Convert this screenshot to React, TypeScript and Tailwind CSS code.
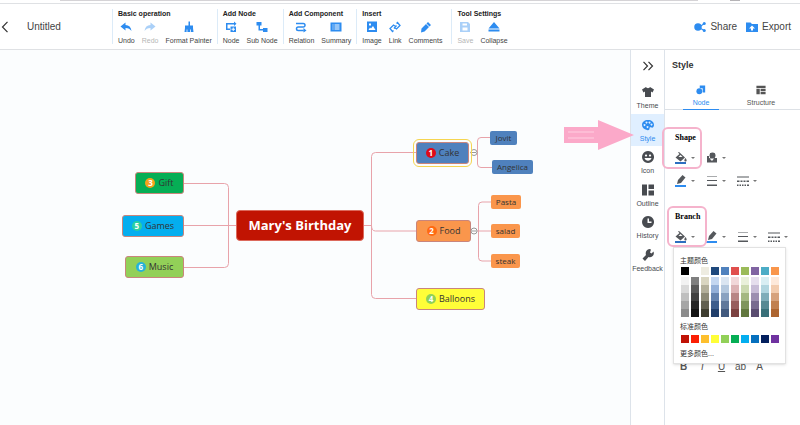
import type { ReactNode } from "react";

type Tool = { label: string; icon: ReactNode; disabled?: boolean };
type Group = { title: string; tools: Tool[] };

function Svg({ children, className = "size-3" }: { children: ReactNode; className?: string }) {
  return (
    <svg viewBox="0 0 24 24" className={className} fill="currentColor" stroke="none" aria-hidden="true">
      {children}
    </svg>
  );
}

const groups: Group[] = [
  {
    title: "Basic operation",
    tools: [
      { label: "Undo", icon: <Svg><path d="M11 3v5c7 0 11 4 12 12-3-4-6-6-12-6v5L1 11z" /></Svg> },
      { label: "Redo", disabled: true, icon: <Svg><path d="M13 3v5C6 8 2 12 1 20c3-4 6-6 12-6v5l10-8z" /></Svg> },
      {
        label: "Format Painter",
        icon: <Svg><path d="M11 1h3v8h6v5H4V9h7zM4 14h16l1 8H3z" /><path d="M8 17v5M15 17v5" stroke="#fff" strokeWidth="1.500" /></Svg>,
      },
    ],
  },
  {
    title: "Add Node",
    tools: [
      {
        label: "Node",
        icon: (
          <Svg>
            <path d="M2 4h16V1l5 4.500-5 4.500V7H5v8h5v3H2z" />
            <path fillRule="evenodd" d="M11 11h11v11H11zM15.500 13v2.500H13v2h2.500V20h2v-2.500H20v-2h-2.500V13z" />
          </Svg>
        ),
      },
      { label: "Sub Node", icon: <Svg><path d="M1 2h10v7H8v7h6v-2h9v8h-9v-3H5V9H1z" /></Svg> },
    ],
  },
  {
    title: "Add Component",
    tools: [
      {
        label: "Relation",
        icon: (
          <Svg>
            <path
              d="M2 5h14.500a3.500 3.500 0 0 1 0 7H6.500a3.500 3.500 0 0 0 0 7h11"
              fill="none"
              stroke="currentColor"
              strokeWidth="3"
            />
            <path d="M17 14l6 5-6 4z" />
          </Svg>
        ),
      },
      {
        label: "Summary",
        icon: <Svg><path fillRule="evenodd" d="M1 3h22v18H1zM5 7v2h2V7zm4 0v2h10V7zm-4 4v2h2v-2zm4 0v2h10v-2zm-4 4v2h2v-2zm4 0v2h10v-2z" /></Svg>,
      },
    ],
  },
  {
    title: "Insert",
    tools: [
      {
        label: "Image",
        icon: <Svg><path fillRule="evenodd" d="M2 1h20v21H2zM5 18h14l-5-8-4 5-2-2zM6 5v4h4V5z" /></Svg>,
      },
      {
        label: "Link",
        icon: (
          <Svg>
            <path
              d="M10 15l5-6M9 19l-2 2-5-6 7-7 4 3M15 5l2-2 5 6-7 7-4-3"
              fill="none"
              stroke="currentColor"
              strokeWidth="2.600"
            />
          </Svg>
        ),
      },
      { label: "Comments", icon: <Svg><path d="M16 2l6 6-3 3-6-6zM12 6l6 6-9 9-7 2 1-8z" /></Svg> },
    ],
  },
  {
    title: "Tool Settings",
    tools: [
      {
        label: "Save",
        disabled: true,
        icon: <Svg><path fillRule="evenodd" d="M2 2h16l4 4v16H2zM7 5v4h9V5zm0 8v6h10v-6z" /></Svg>,
      },
      { label: "Collapse", icon: <Svg><path d="M12 2l11 13H1zM1 17h22v4H1z" /></Svg> },
    ],
  },
];

const sideItems: Tool[] = [
  { label: "Theme", icon: <Svg><path d="M8 2c1 3 7 3 8 0l8 5-3 6-3-2v11H6V11l-3 2-3-6z" /></Svg> },
  {
    label: "Style",
    icon: (
      <Svg>
        <path
          fillRule="evenodd"
          d="M12 2c7 0 12 4 12 10 0 4-3 6-5 5-3-1-4 0-4 2 0 3-2 4-5 3C4 21 0 17 0 12 0 6 5 2 12 2zM5 10a2 2 0 1 0 .1 0zM9 5a2 2 0 1 0 .1 0zM15 5a2 2 0 1 0 .1 0zM19 9a2 2 0 1 0 .1 0zM11 14a2 2 0 1 0 .1 0z"
        />
      </Svg>
    ),
  },
  {
    label: "Icon",
    icon: (
      <Svg>
        <path
          fillRule="evenodd"
          d="M12 0a12 12 0 1 0 .1 0zM8 7a2 2 0 1 0 .1 0zM16 7a2 2 0 1 0 .1 0zM5 14h14c-2 7-12 7-14 0z"
        />
      </Svg>
    ),
  },
  { label: "Outline", icon: <Svg><path d="M0 1h10v22H0zM13 1h11v9H13zM13 13h11v10H13z" /></Svg> },
  {
    label: "History",
    icon: <Svg><path fillRule="evenodd" d="M12 0a12 12 0 1 0 .1 0zM11 5v9h8v-3h-5V5z" /></Svg>,
  },
  {
    label: "Feedback",
    icon: <Svg><path d="M15 0l3 1-2 6 3 2 4-4c3 8-4 13-10 11l-7 8-5-5 7-7C6 6 9 1 15 0z" /></Svg>,
  },
];

type MapNode = { label: string; badge?: string; box: string; badgeColor?: string };

const mapNodes: MapNode[] = [
  { label: "Gift", badge: "3", box: "left-[135px] top-[122px] w-[49px] bg-[#06ae55]", badgeColor: "bg-[#f6a21c]" },
  { label: "Games", badge: "5", box: "left-[122px] top-[165px] w-[62px] bg-[#04aeef]", badgeColor: "bg-[#2bcfa0]" },
  { label: "Music", badge: "6", box: "left-[125px] top-[206px] w-[59px] bg-[#92d058]", badgeColor: "bg-[#26b2d8]" },
  { label: "Cake", badge: "1", box: "left-[416px] top-[92px] w-[53px] bg-[#4f81bd] outline outline-[#f5d550] outline-offset-2", badgeColor: "bg-[#e00a19]" },
  { label: "Food", badge: "2", box: "left-[416px] top-[170px] w-[55px] bg-[#fa964c]", badgeColor: "bg-[#ff6a13]" },
  { label: "Balloons", badge: "4", box: "left-[416px] top-[238px] w-[69px] bg-[#fffe38]", badgeColor: "bg-[#8fd158]" },
];

const leafNodes: MapNode[] = [
  { label: "Jovit", box: "left-[490px] top-[81px] w-[27px] bg-[#4f81bd]" },
  { label: "Angelica", box: "left-[492px] top-[110px] w-[41px] bg-[#4f81bd]" },
  { label: "Pasta", box: "left-[491px] top-[145px] w-[30px] bg-[#fa964c]" },
  { label: "salad", box: "left-[491px] top-[174px] w-[29px] bg-[#fa964c]" },
  { label: "steak", box: "left-[491px] top-[204px] w-[29px] bg-[#fa964c]" },
];

const themeColors = [
  ["#000000", "#f2f2f2", "#d9d9d9", "#bfbfbf", "#a6a6a6", "#8c8c8c"],
  ["#ffffff", "#7f7f7f", "#595959", "#404040", "#262626", "#141414"],
  ["#eeece1", "#d9d5c0", "#b3af9a", "#8d8a76", "#626050", "#3f3e30"],
  ["#1f497d", "#c3d6f0", "#94b0d8", "#6583ae", "#3d5d8c", "#213f6b"],
  ["#4f81bd", "#dae5f1", "#b4c8de", "#8aa2c0", "#61799b", "#425a7e"],
  ["#e04f4d", "#f1d7d9", "#dcb2b4", "#b88686", "#985e5e", "#7c4241"],
  ["#9bbb59", "#e9f0da", "#cbd9b0", "#a4b782", "#7f955c", "#62783f"],
  ["#8064a2", "#e5deed", "#c7bcd6", "#9c8fb0", "#786b8f", "#5a4c70"],
  ["#4bacc6", "#d8eef3", "#b0d5df", "#80adb9", "#588993", "#397079"],
  ["#f9964b", "#fde9da", "#f2ccae", "#d6a27c", "#c1804f", "#ad6530"],
];

const standardColors = [
  "#c01205", "#fb1f05", "#fdbf2d", "#fffe38", "#92d058",
  "#06ae55", "#04aeef", "#0670bd", "#03205e", "#6f32a0",
];

function Header() {
  return (
    <header className="flex h-[47px] border-y border-[#dfe1e4] bg-white">
      <div className="flex w-28 shrink-0 items-center">
        <button aria-label="Back" className="w-[27px]">
          <svg viewBox="0 0 8 12" className="ml-px h-3 w-2" fill="none" stroke="#333" strokeWidth="1.200">
            <path d="M6.500.8L1.500 6l5 5.200" />
          </svg>
        </button>
        <h1 className="text-[10px] text-[#444]">Untitled</h1>
      </div>
      <div className="flex py-[5px]">
        {groups.map((group) => (
          <section key={group.title} className="border-l border-[#dcebf8] pl-[5px] pr-[5px] nth-4:pr-[9px]">
            <h2 className="text-[7px] leading-[9px] font-bold whitespace-nowrap text-[#222]">{group.title}</h2>
            <div className="mt-[3px] flex gap-[7px]">
              {group.tools.map((tool) => (
                <button
                  key={tool.label}
                  disabled={tool.disabled}
                  className="flex flex-col items-center text-[#2d8cf0] disabled:opacity-40"
                >
                  {tool.icon}
                  <span className="mt-[3px] text-[7px] leading-[10px] whitespace-nowrap text-[#444]">{tool.label}</span>
                </button>
              ))}
            </div>
          </section>
        ))}
      </div>
      <div className="ml-auto flex items-center gap-[9px] pr-[9px] text-[10px] text-[#444]">
        <button className="flex items-center gap-1">
          <Svg className="size-3 text-[#2d8cf0]">
            <circle cx="8" cy="12" r="7.500" />
            <path d="M12 10l8-6 1 2-8 6zM12 13l9 5-1 2-9-5z" />
            <circle cx="20.500" cy="5" r="3" />
            <circle cx="20.500" cy="19" r="3" />
          </Svg>
          Share
        </button>
        <button className="flex items-center gap-1">
          <Svg className="size-3 text-[#2d8cf0]">
            <path fillRule="evenodd" d="M0 3h9l3 3h12v16H0zM12 9l-6 6h4v4h4v-4h4z" />
          </Svg>
          Export
        </button>
      </div>
    </header>
  );
}

function MindMap() {
  return (
    <main className="relative min-w-0 flex-1 overflow-hidden bg-[#fbfdfe] font-['Open_Sans','Noto_Sans',sans-serif] text-[#333]">
      <svg className="absolute top-0 left-0 h-[375px] w-[630px]" fill="none" stroke="#e8a3aa">
        <path d="M184 133.500h40.500q4 0 4 4v76q0 4-4 4H184M184 175.500h52" />
        <path d="M363 175.500h8.500M416 102.500h-40.500q-4 0-4 4v138q0 4 4 4H416M371.500 175.500q0 5.500 4 5.500H416" />
        <path d="M470 102.500h7.500M490 87.500h-9q-3.500 0-3.500 3.500v23q0 3.500 3.500 3.500h11" />
        <path d="M471 181h20M491 152h-9q-3.500 0-3.500 3.500v52q0 3.500 3.500 3.500h9" />
        <g stroke="#999" fill="#fff">
          <circle cx="474" cy="102.500" r="3" />
          <path d="M472 102.500h4" />
          <circle cx="474" cy="181" r="3" />
          <path d="M472 181h4" />
        </g>
      </svg>
      <div className="absolute top-[160px] left-[236px] flex h-[31px] w-[128px] items-center justify-center rounded border border-[#dc6a5c] bg-[#c11402] text-[13px] font-bold whitespace-nowrap text-white">
        Mary's Birthday
      </div>
      {mapNodes.map((node) => (
        <div
          key={node.label}
          className={`absolute flex h-[22px] items-center justify-center gap-[3px] rounded-[3px] border border-[#c9857c] text-[9px] ${node.box}`}
        >
          <span className={`flex size-[10px] items-center justify-center rounded-full text-[8px] leading-none font-bold text-white ${node.badgeColor}`}>
            {node.badge}
          </span>
          {node.label}
        </div>
      ))}
      {leafNodes.map((node) => (
        <div
          key={node.label}
          className={`absolute flex h-[14px] items-center justify-center rounded-[2px] text-[8px] ${node.box}`}
        >
          {node.label}
        </div>
      ))}
    </main>
  );
}

function SideNav() {
  return (
    <nav className="relative w-[35px] shrink-0 border-x border-[#dde3ea] bg-white">
      <button aria-label="Collapse panel" className="flex h-[31px] w-full items-center justify-center">
        <svg viewBox="0 0 12 10" className="h-[10px] w-3" fill="none" stroke="#333" strokeWidth="1.200">
          <path d="M1.500.8L5.500 5l-4 4.200M6.500.8L10.500 5l-4 4.200" />
        </svg>
      </button>
      <div className="flex h-[195px] flex-col">
        {sideItems.map((item) => (
          <button
            key={item.label}
            aria-pressed={item.label === "Style"}
            className="flex flex-1 flex-col items-center justify-center gap-[3px] pt-[2px] text-[#484b50] aria-pressed:bg-[#e0efff] aria-pressed:text-[#2d8cf0]"
          >
            {item.icon}
            <span className="text-[7px] leading-[9px]">{item.label}</span>
          </button>
        ))}
      </div>
      <svg viewBox="0 0 70 30" className="absolute top-[70px] left-[-67px] h-[30px] w-[70px]" aria-hidden="true">
        <path d="M0 7h34V0l36 15-36 15v-7H0z" fill="#fba9c9" />
        <path d="M4 12h26M4 18h26" stroke="#fdbcd5" strokeWidth="2" />
      </svg>
    </nav>
  );
}

const bucket = (
  <Svg>
    <path d="M8 0l12 11-9 8L1 11l8-7-3-3z" />
    <path d="M7 10l4-4 4 4z" fill="#fff" />
    <path d="M21 12c4 5 2 7 0 7s-4-2 0-7z" />
    <path d="M0 20h22v4H0z" fill="#2d6fc0" />
  </Svg>
);
const stamp = (
  <Svg>
    <path d="M8 2h9v10h5v9H2V8h4v4h2z" />
    <circle cx="13" cy="7" r="6" />
    <path d="M7 13h9l-4 5z" fill="#fff" />
  </Svg>
);
const pen = (
  <Svg>
    <path d="M15 0l6 5-9 11-8 2 2-8z" />
    <path d="M0 20h22v4H0z" fill="#2d8cf0" />
  </Svg>
);
const lines = <Svg><path d="M2 2h20v1H2zM2 10h20v2H2zM2 19h20v3H2z" /></Svg>;
const dashes = (
  <Svg>
    <path d="M0 3h24v2H0zM0 11h5v3H0zM7 11h4v3H7zM13 11h4v3h-4zM19 11h5v3h-5zM0 19h3v3H0zM5 19h3v3H5zM10 19h3v3h-3zM15 19h3v3h-3zM20 19h4v3h-4z" />
  </Svg>
);

function OptionRow({ options }: { options: { name: string; icon: ReactNode }[] }) {
  return (
    <div className="flex h-[23px] items-center gap-[11px] text-[#55585c]">
      {options.map((option) => (
        <button key={option.name} aria-label={option.name} className="flex w-5 shrink-0 items-center justify-between">
          {option.icon}
          <span className="border-x-2 border-t-2 border-x-transparent border-t-[#777]" />
        </button>
      ))}
    </div>
  );
}

function ColorPicker() {
  return (
    <div className="absolute top-[197px] left-[8px] w-[113px] border border-[#e2e2e2] bg-white px-[6px] pt-2 pb-1 font-['Liberation_Sans','Noto_Sans_CJK_SC',sans-serif] text-[7px] leading-[10px] text-[#333] shadow">
      <p>主题颜色</p>
      <div className="mt-px flex gap-[2px] pl-px">
        {themeColors.map(([base, ...shades]) => (
          <div key={base}>
            <button aria-label={base} className="mb-[2px] block size-2" style={{ background: base }} />
            {shades.map((shade) => (
              <button key={shade} aria-label={shade} className="block size-2" style={{ background: shade }} />
            ))}
          </div>
        ))}
      </div>
      <p className="mt-[5px]">标准颜色</p>
      <div className="mt-[3px] flex gap-[2px] pl-px">
        {standardColors.map((color) => (
          <button key={color} aria-label={color} className="block size-2" style={{ background: color }} />
        ))}
      </div>
      <button className="mt-[6px] block">更多颜色...</button>
    </div>
  );
}

function StylePanel() {
  return (
    <aside className="relative w-[135px] shrink-0 bg-white">
      <h2 className="px-[7px] pt-[9px] text-[9px] leading-3 font-bold text-[#333]">Style</h2>
      <div role="tablist" className="mt-[14px] flex border-b border-[#dde1e6] px-[6px] text-[7px] leading-[9px]">
        <button role="tab" aria-selected="true" className="flex w-[60px] flex-col items-center text-[#2d8cf0]">
          <Svg className="size-[10px]">
            <path d="M9 1h13v17h-6V8H9z" />
            <circle cx="8" cy="15" r="7" />
          </Svg>
          <span className="mt-[3px]">Node</span>
          <span className="mt-[2px] -mb-px h-px w-9 bg-[#2d8cf0]" />
        </button>
        <button role="tab" aria-selected="false" className="flex w-[60px] flex-col items-center text-[#555]">
          <Svg className="size-[10px]">
            <path d="M1 2h22v5H1zM1 9h8v13H1zM11 9h12v6H11zM11 17h12v5H11z" />
          </Svg>
          <span className="mt-[3px]">Structure</span>
        </button>
      </div>
      <section className="pt-[23px] pl-[10px]">
        <h3 className="font-['Liberation_Serif',serif] text-[8px] leading-[10px] font-bold text-black">Shape</h3>
        <div className="mt-[3px]">
          <OptionRow
            options={[
              { name: "Shape fill", icon: bucket },
              { name: "Shape type", icon: stamp },
            ]}
          />
          <OptionRow
            options={[
              { name: "Shape border color", icon: pen },
              { name: "Shape border width", icon: lines },
              { name: "Shape border dash", icon: dashes },
            ]}
          />
        </div>
      </section>
      <section className="pt-5 pl-[10px]">
        <h3 className="font-['Liberation_Serif',serif] text-[8px] leading-[10px] font-bold text-black">Branch</h3>
        <div className="mt-[3px]">
          <OptionRow
            options={[
              { name: "Branch fill", icon: bucket },
              { name: "Branch line color", icon: pen },
              { name: "Branch line width", icon: lines },
              { name: "Branch line dash", icon: dashes },
            ]}
          />
        </div>
      </section>
      <div className="mt-[113px] flex pl-[9px] text-[10px] leading-3 text-[#555]">
        <button className="w-[19px] font-bold">B</button>
        <button className="w-[19px] italic">I</button>
        <button className="w-[19px] underline">U</button>
        <button className="w-[19px]">ab</button>
        <button className="w-[19px]">A</button>
      </div>
      <ColorPicker />
      <div className="absolute top-[77px] left-[-3px] h-[42px] w-10 rounded-md border-2 border-[#f5b3cc]" />
      <div className="absolute top-[156px] left-[2px] h-[41px] w-10 rounded-md border-2 border-[#f5b3cc]" />
    </aside>
  );
}

export default function App() {
  return (
    <div className="flex min-h-screen flex-col bg-white font-['Liberation_Sans',Arial,sans-serif]">
      <div className="flex h-[3px] items-start pr-[60px] pl-[60px]">
        <div className="h-px flex-1 bg-[#d5d3d6]" />
        <div className="ml-8 h-px w-[10px] bg-[#b5b3b6]" />
      </div>
      <Header />
      <div className="flex flex-1">
        <MindMap />
        <SideNav />
        <StylePanel />
      </div>
    </div>
  );
}
